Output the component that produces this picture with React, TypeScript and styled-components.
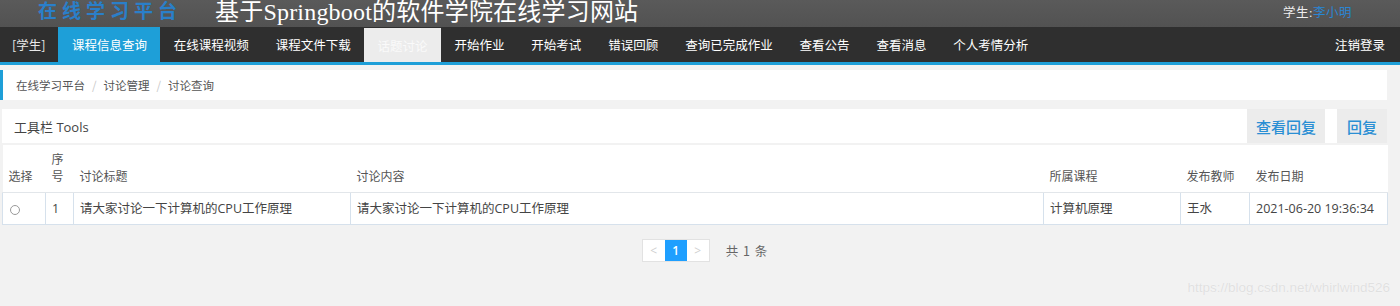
import React from "react";
import styled, { createGlobalStyle } from "styled-components";

const GlobalStyle = createGlobalStyle`
  html, body { margin: 0; padding: 0; background: #f2f2f2; }
  body { font-family: "Open Sans", "Noto Sans CJK SC", sans-serif; }
  * { box-sizing: border-box; }
`;

const Page = styled.div`
  position: relative;
  width: 1400px;
  height: 306px;
  overflow: hidden;
  background: #f2f2f2;
`;

const Header = styled.header`
  height: 27px;
  background: linear-gradient(#5a5a5a, #525252);
  display: flex;
  align-items: flex-start;
  overflow: hidden;
  padding-left: 38px;
  padding-right: 48px;
  font-family: "Liberation Serif", "Noto Sans CJK SC", serif;
`;

const Brand = styled.div`
  color: #2a7fc9;
  font-size: 19px;
  line-height: 24px;
  letter-spacing: 5px;
  font-weight: bold;
`;

const SiteTitle = styled.div`
  color: #ffffff;
  font-size: 24px;
  line-height: 24px;
  margin-left: 33px;
  letter-spacing: 0.2px;
`;

const UserInfo = styled.div`
  margin-left: auto;
  margin-top: 5px;
  font-size: 12.5px;
  line-height: 16px;
  color: #eeeeee;
  letter-spacing: 0.5px;
`;

const UserName = styled.span`
  color: #2a86d4;
`;

const Nav = styled.nav`
  height: 38px;
  background: #2f2f2f;
  border-bottom: 3px solid #1e9fd8;
  display: flex;
  align-items: stretch;
  padding-left: 12px;
  padding-right: 15px;
  font-family: "Noto Sans CJK SC", sans-serif;
  font-size: 12.5px;
  color: #ffffff;
`;

const Role = styled.div`
  display: flex;
  align-items: center;
  margin-right: 13px;
  color: #e8e8e8;
`;

const NavItem = styled.div<{ $state?: "active" | "light" }>`
  display: flex;
  align-items: center;
  padding: 0 13.45px;
  white-space: nowrap;
  background: ${(p) =>
    p.$state === "active" ? "#1e9fd8" : p.$state === "light" ? "#ececec" : "transparent"};
  color: ${(p) => (p.$state === "light" ? "#fafafa" : "#ffffff")};
  margin-top: ${(p) => (p.$state === "light" ? "1px" : "0")};
`;

const Logout = styled.div`
  margin-left: auto;
  display: flex;
  align-items: center;
`;

const Content = styled.div`
  width: 1387px;
  padding-top: 5px;
`;

const Breadcrumb = styled.div`
  height: 30px;
  background: #ffffff;
  border-left: 3px solid #1e9fd8;
  display: flex;
  align-items: center;
  padding-left: 13px;
  font-family: "Noto Sans CJK SC", sans-serif;
  font-size: 11.5px;
  color: #555555;
`;

const Sep = styled.span`
  color: #c8c8c8;
  margin: 0 7px;
`;

const Toolbar = styled.div`
  margin: 9px 0 2px 2px;
  height: 34px;
  background: #ffffff;
  display: flex;
  align-items: stretch;
`;

const ToolTitle = styled.div`
  display: flex;
  align-items: center;
  padding-left: 12px;
  font-family: "Open Sans", "Noto Sans CJK SC", sans-serif;
  font-size: 13px;
  color: #444444;
`;

const ToolButton = styled.button<{ $w: number }>`
  width: ${(p) => p.$w}px;
  border: none;
  background: #ececec;
  color: #2a8fd4;
  font-family: "Noto Sans CJK SC", sans-serif;
  font-size: 15px;
  font-weight: 500;
  padding: 0;
  margin-left: 12px;
  &:first-of-type { margin-left: auto; }
`;

const Table = styled.table`
  margin-left: 2px;
  width: 1385px;
  table-layout: fixed;
  border-collapse: collapse;
  font-family: "Open Sans", "Noto Sans CJK SC", sans-serif;
  font-size: 12px;
`;

const Th = styled.th`
  background: #ffffff;
  text-align: left;
  vertical-align: bottom;
  font-weight: normal;
  color: #555555;
  line-height: 17px;
  padding: 6px 6px 7px;
  border-bottom: 1px solid #e2e6ea;
`;

const Td = styled.td`
  background: #ffffff;
  color: #444444;
  font-size: 12.5px;
  line-height: 18px;
  padding: 7px 6px 6px;
  border: 1px solid #d6e1ec;
  white-space: nowrap;
`;

const Radio = styled.span`
  display: inline-block;
  width: 10px;
  height: 10px;
  border: 1px solid #9a9a9a;
  border-radius: 50%;
  margin-left: 1px;
  vertical-align: middle;
`;

const PagerRow = styled.div`
  display: flex;
  justify-content: center;
  align-items: center;
  margin-top: 14px;
  padding-left: 23px;
`;

const Pager = styled.div`
  display: flex;
  border: 1px solid #e2e2e2;
  background: #ffffff;
  height: 23px;
`;

const PageBtn = styled.span<{ $active?: boolean }>`
  width: 22px;
  display: flex;
  align-items: center;
  justify-content: center;
  font-family: "Open Sans", sans-serif;
  font-size: 12px;
  font-weight: ${(p) => (p.$active ? 600 : 400)};
  color: ${(p) => (p.$active ? "#ffffff" : "#d0d0d0")};
  background: ${(p) => (p.$active ? "#1e9fff" : "#ffffff")};
`;

const Count = styled.span`
  margin-left: 16px;
  font-family: "Noto Sans CJK SC", sans-serif;
  font-size: 12.5px;
  color: #666666;
  letter-spacing: 1px;
`;

const Watermark = styled.div`
  position: absolute;
  right: 10px;
  bottom: 11px;
  font-family: "Liberation Sans", sans-serif;
  font-size: 13.5px;
  color: #e0e0e0;
  text-shadow: 0 0 1px #ffffff;
`;

const navItems = ["在线课程视频", "课程文件下载"];
const navItems2 = [
  "开始作业",
  "开始考试",
  "错误回顾",
  "查询已完成作业",
  "查看公告",
  "查看消息",
  "个人考情分析",
];

const cols = [43, 28, 277, 693, 137, 69, 138];

export default function App() {
  return (
    <Page>
      <GlobalStyle />
      <Header>
        <Brand>在线学习平台</Brand>
        <SiteTitle>基于Springboot的软件学院在线学习网站</SiteTitle>
        <UserInfo>
          学生:<UserName>李小明</UserName>
        </UserInfo>
      </Header>
      <Nav>
        <Role>[学生]</Role>
        <NavItem $state="active">课程信息查询</NavItem>
        {navItems.map((n) => (
          <NavItem key={n}>{n}</NavItem>
        ))}
        <NavItem $state="light">话题讨论</NavItem>
        {navItems2.map((n) => (
          <NavItem key={n}>{n}</NavItem>
        ))}
        <Logout>注销登录</Logout>
      </Nav>
      <Content>
        <Breadcrumb>
          在线学习平台<Sep>/</Sep>讨论管理<Sep>/</Sep>讨论查询
        </Breadcrumb>
        <Toolbar>
          <ToolTitle>工具栏 Tools</ToolTitle>
          <ToolButton $w={78}>查看回复</ToolButton>
          <ToolButton $w={50}>回复</ToolButton>
        </Toolbar>
        <Table>
          <colgroup>
            {cols.map((w, i) => (
              <col key={i} style={{ width: w }} />
            ))}
          </colgroup>
          <thead>
            <tr>
              <Th>选择</Th>
              <Th>序号</Th>
              <Th>讨论标题</Th>
              <Th>讨论内容</Th>
              <Th>所属课程</Th>
              <Th>发布教师</Th>
              <Th>发布日期</Th>
            </tr>
          </thead>
          <tbody>
            <tr>
              <Td>
                <Radio />
              </Td>
              <Td>1</Td>
              <Td>请大家讨论一下计算机的CPU工作原理</Td>
              <Td>请大家讨论一下计算机的CPU工作原理</Td>
              <Td>计算机原理</Td>
              <Td>王水</Td>
              <Td>2021-06-20 19:36:34</Td>
            </tr>
          </tbody>
        </Table>
        <PagerRow>
          <Pager>
            <PageBtn>&lt;</PageBtn>
            <PageBtn $active>1</PageBtn>
            <PageBtn>&gt;</PageBtn>
          </Pager>
          <Count>共 1 条</Count>
        </PagerRow>
      </Content>
      <Watermark>https://blog.csdn.net/whirlwind526</Watermark>
    </Page>
  );
}
